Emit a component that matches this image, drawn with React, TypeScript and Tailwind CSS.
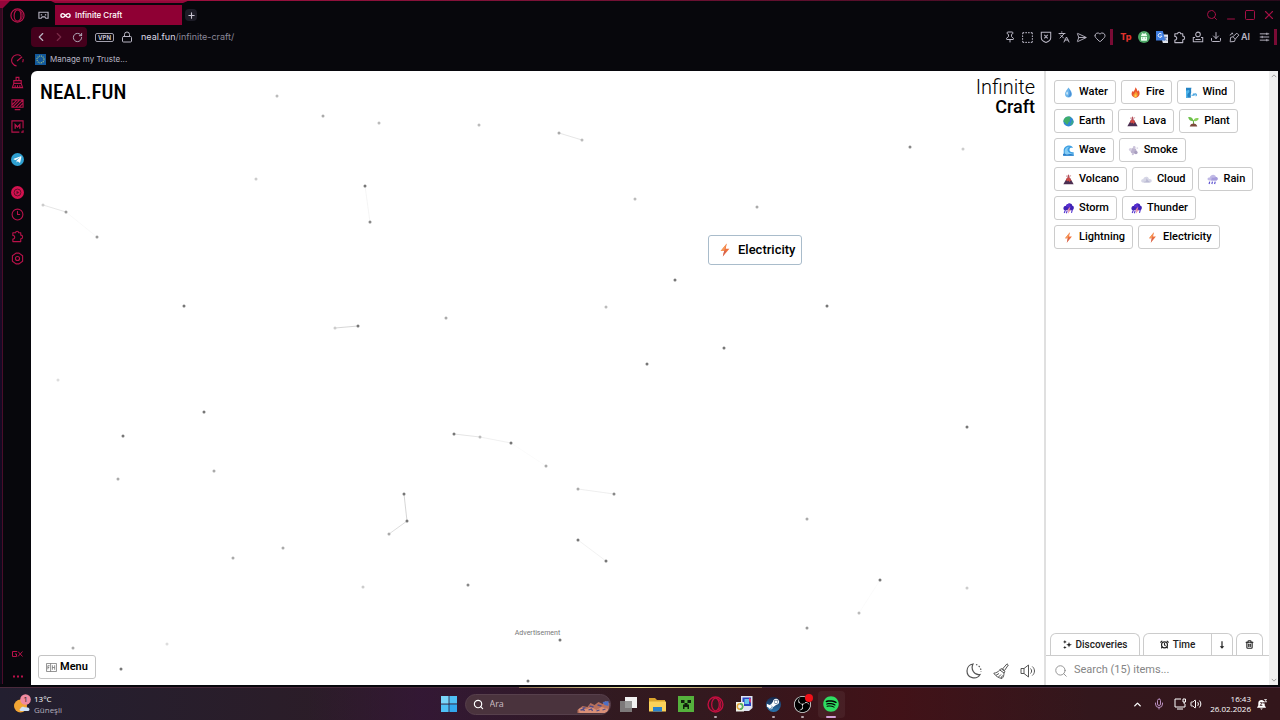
import type { ReactNode } from "react";
import {
  AlarmClock,
  ChevronLeft,
  ChevronRight,
  ChevronUp,
  Clock3,
  Download,
  Heart,
  Infinity as InfinityIcon,
  Languages,
  Lock,
  Mic,
  Minus,
  Pin,
  Plus,
  RotateCw,
  Search,
  SendHorizontal,
  Square,
  SquareDashed,
  Trash2,
  Volume2,
  X,
} from "lucide-react";
import { FaSpotify, FaSteamSymbol, FaTelegramPlane } from "react-icons/fa";
import { SiObsstudio } from "react-icons/si";

/* ---------- element glyphs ---------- */

const glyphs: Record<string, ReactNode> = {
  water: (
    <>
      <path d="M8 .8C10.500 4.500 13 7 13 10.300A5 5 0 0 1 3 10.300C3 7 5.500 4.500 8 .8Z" fill="#6bb4ea" />
      <path d="M8.500 3C11 6 12 8 12 10.500A4 4 0 0 1 7 14C10 12 10.500 8 8.500 3Z" fill="#4b8fd6" />
      <ellipse cx="6" cy="9" rx="1.200" ry="2.400" fill="#c9e8fb" />
    </>
  ),
  fire: (
    <>
      <path d="M7.500.5C11 3 10 5.500 11.500 6.500C12 6 12 5 12 4.500C14 6.500 14.200 9 13.800 11C13 14 11 15.500 8 15.500S2.500 13.500 2.300 10.300C2.200 8 3.500 6.500 4.500 5.500C4.700 6.500 5 7 5.700 7.300C5.500 4.500 8.500 3.500 7.500.5Z" fill="#e8552f" />
      <path d="M8.300 6C10 8 11.500 9 11.300 11.500C11 14 9.500 15 8 15S4.700 13.800 4.800 11.500C5 9.800 8 9 8.300 6Z" fill="#f79a2e" />
      <path d="M8 10C9.500 11.500 9.800 12.500 9.500 13.500C9 15 7 15 6.500 13.500C6.200 12.300 7.800 11.500 8 10Z" fill="#fcd34d" />
    </>
  ),
  wind: (
    <>
      <path d="M0 1H8C6.500 4 8.500 7 7 10C6.500 12 7.500 14 7 15.500H0Z" fill="#2383c4" />
      <path d="M2 5C5 3 6 7 4 8.500S1 12 3 15.500H0V5Z" fill="#4fb4ea" />
      <path d="M8 12H12.500M10 10.500H12.500A1.500 1.500 0 1 1 14 13" stroke="#4aa5e0" strokeWidth="1.800" fill="none" />
    </>
  ),
  earth: (
    <>
      <circle cx="8" cy="8" r="7.400" fill="#2f86d6" />
      <path d="M2 4C4 1 8 0 11 1.500C12 3.500 9 4.500 10 6.500C11 8.500 8 8 7.500 10.500C7 13 5 13 4 11C3.500 9 1 9 .8 8C.8 6 1 5 2 4Z" fill="#3fae6c" />
      <path d="M13 5.500C14.500 6 15.400 8 15.300 9C14.500 12 12 14 11 13.500C10 12 11 10.500 12 9.500C12.500 8.500 12 6.500 13 5.500Z" fill="#39a78d" />
    </>
  ),
  lava: (
    <>
      <path d="M6 5.500H10L15.500 15H.5Z" fill="#4b2f52" />
      <path d="M6 5.500H10L12.500 10L10.500 9.500L9.800 12L8 9.500L6.500 11L5.800 9.300L3.800 9.500Z" fill="#d04a44" />
      <path d="M8 .5L9.500 3L9 6H7L6.500 3Z" fill="#b5525c" />
      <circle cx="5.300" cy="3" r="1" fill="#c98a90" />
      <circle cx="11" cy="2.600" r=".9" fill="#c98a90" />
    </>
  ),
  plant: (
    <>
      <path d="M8 13C8.500 10 8 8 7.500 6" stroke="#5fa53a" strokeWidth="1.500" fill="none" />
      <path d="M7.800 7C4 8 1 6 .3 1.500C4.500 1 7.500 3 7.800 7Z" fill="#6cc04a" />
      <path d="M8 7C8.500 4 11.500 2 15.700 3.500C14.500 7 11 8.500 8 7Z" fill="#8ad05a" />
      <path d="M2.500 15.200C3.500 12 6 11 8 11S12.500 12 13.500 15.200Z" fill="#7d4a3c" />
    </>
  ),
  wave: (
    <>
      <path d="M1 15.500V8C1 3 5 .8 9 .8C12 .8 14 2.500 14.500 4.500C12.500 3.500 10 4 9.500 6.200C9 9 11.500 11 15.500 10.500V15.500Z" fill="#3f9fe2" />
      <path d="M2.500 8C3 4.500 6 2.300 9.500 2.500C7 4 6 6 6.800 8.500C7.600 11 11 13 15.500 12.500V15.500H4C2.500 13 2.300 10.500 2.500 8Z" fill="#86cdf5" />
      <path d="M0 13C3 11.500 5 14.500 8 13.500S13 13 15.500 14V15.800H0Z" fill="#2c7fc9" />
    </>
  ),
  smoke: (
    <>
      <circle cx="8" cy="8.500" r="4.300" fill="#bdb3cf" />
      <circle cx="3.500" cy="6.500" r="2.200" fill="#d6cfe2" />
      <circle cx="11.500" cy="11" r="2.500" fill="#a99fc0" />
      <circle cx="9" cy="3.500" r="1.900" fill="#cbc3da" />
      <circle cx="13.500" cy="4.500" r="1.400" fill="#ddd7e8" />
      <circle cx="7" cy="13.500" r="1.500" fill="#c7bfd8" />
    </>
  ),
  cloud: (
    <>
      <path d="M3.500 12.500C1 12.500 0 11 .3 9.500C.6 8 2 7.500 3.300 7.800C3.500 5 6 3.500 8.300 4C10.500 4.300 11.500 6 11.500 7.500C14 7 15.800 8.500 15.600 10.200C15.400 12 14 12.500 12.500 12.500Z" fill="#d6d6e6" />
      <path d="M4 11C7 12 9 8 7 6C10 7 10 10.500 13.500 11.500L12 12.500H4Z" fill="#b9b9d2" />
    </>
  ),
  rain: (
    <>
      <path d="M3.500 9.500C1 9.500 .3 7.800 1 6.300C1.600 5 3 4.800 4 5C5 2 7.500.8 10 1.300C12 1.700 13 3 13 4.300C15 4.300 15.800 5.800 15.500 7.300C15.200 9 14 9.500 12.500 9.500Z" fill="#c0b9e6" />
      <path d="M7 5C10 6 12 5 13 4.300C15 4.300 15.800 5.800 15.500 7.300C15.200 9 14 9.500 12.500 9.500H6Z" fill="#a59bdb" />
      <path d="M4 11L3 14.500M8 11L7 14.500M12 11L11 14.500" stroke="#5a4fd0" strokeWidth="1.700" />
    </>
  ),
  storm: (
    <>
      <path d="M3.500 10.500C1 10.500 .1 8.500 .8 6.500C1.400 5 3 4.300 4 4.500C5 1.700 7.500.4 10.300.9C12.500 1.300 13.600 2.600 13.500 4C15.400 4 16 5.800 15.700 7.500C15.400 9.500 14 10.500 12.500 10.500Z" fill="#3f22b5" />
      <path d="M4 4.500C5 1.700 7.500.4 10.300.9C9 3 10 5 12 6C9 7.500 6 7 4 4.500Z" fill="#5a2fd0" />
      <path d="M9 6.500L6 11H8L7 15.500L11.500 9.800H9.300L10.500 6.500Z" fill="#e98ba0" />
      <path d="M3.500 10L1.800 14.500M6 11.500L4.800 15M13.500 10L12.300 14.500" stroke="#5a3cd0" strokeWidth="1.700" />
    </>
  ),
  bolt: (
    <>
      <path d="M10 .5L3 9H7L5.500 15.500L13 6.500H8.800Z" fill="#f0703c" />
      <path d="M10 .5L3 9H7L8.300 5Z" fill="#f59a5a" />
      <path d="M5.500 15.500L7 9.500L9.500 8.500Z" fill="#c9605c" />
    </>
  ),
};

function Glyph({ name, className }: { name: string; className: string }) {
  return (
    <svg viewBox="0 0 16 16" className={className} aria-hidden="true">
      {glyphs[name]}
    </svg>
  );
}

const elements: [string, string][] = [
  ["water", "Water"],
  ["fire", "Fire"],
  ["wind", "Wind"],
  ["earth", "Earth"],
  ["lava", "Lava"],
  ["plant", "Plant"],
  ["wave", "Wave"],
  ["smoke", "Smoke"],
  ["lava", "Volcano"],
  ["cloud", "Cloud"],
  ["rain", "Rain"],
  ["storm", "Storm"],
  ["storm", "Thunder"],
  ["bolt", "Lightning"],
  ["bolt", "Electricity"],
];

/* ---------- canvas particles: x, y, shade ---------- */

const particles: [number, number, string][] = [
  [246, 25, "#bbb"], [292, 45, "#aaa"], [348, 52, "#bbb"], [448, 54, "#bbb"], [528, 62, "#aaa"], [551, 69, "#bbb"],
  [225, 108, "#ccc"], [334, 115, "#777"], [339, 151, "#888"], [604, 128, "#bbb"], [726, 136, "#aaa"], [879, 76, "#888"],
  [932, 78, "#ccc"], [12, 134, "#ccc"], [35, 141, "#999"], [66, 166, "#999"], [153, 235, "#777"], [415, 247, "#aaa"],
  [304, 257, "#ccc"], [327, 255, "#777"], [644, 209, "#777"], [575, 236, "#bbb"], [796, 235, "#777"], [693, 277, "#777"],
  [616, 293, "#777"], [27, 309, "#ddd"], [173, 341, "#777"], [92, 365, "#777"], [87, 408, "#aaa"], [183, 400, "#aaa"],
  [423, 363, "#777"], [449, 366, "#bbb"], [480, 372, "#777"], [515, 395, "#aaa"], [373, 423, "#777"], [376, 450, "#777"],
  [358, 463, "#aaa"], [547, 418, "#aaa"], [583, 423, "#888"], [547, 469, "#777"], [575, 490, "#777"], [936, 356, "#777"],
  [776, 448, "#aaa"], [849, 509, "#777"], [828, 542, "#bbb"], [776, 557, "#999"], [936, 517, "#ccc"], [252, 477, "#aaa"],
  [202, 487, "#aaa"], [332, 516, "#ccc"], [437, 514, "#888"], [529, 569, "#777"], [497, 610, "#777"], [42, 577, "#aaa"],
  [136, 573, "#ddd"], [90, 598, "#777"],
];

const links: [number, number, number, number, string][] = [
  [528, 62, 551, 69, "#e0e0e0"],
  [12, 134, 35, 141, "#e0e0e0"],
  [35, 141, 66, 166, "#f8f8f8"],
  [334, 115, 339, 151, "#f2f2f2"],
  [304, 257, 327, 255, "#ccc"],
  [423, 363, 449, 366, "#ddd"],
  [449, 366, 480, 372, "#ececec"],
  [480, 372, 515, 395, "#fafafa"],
  [373, 423, 376, 450, "#ccc"],
  [376, 450, 358, 463, "#d4d4d4"],
  [547, 418, 583, 423, "#eaeaea"],
  [547, 469, 575, 490, "#efefef"],
  [849, 509, 828, 542, "#fafafa"],
];

/* ---------- browser chrome ---------- */

function SideButton({ label, children, className = "" }: { label: string; children: ReactNode; className?: string }) {
  return (
    <button aria-label={label} className={`flex h-[22px] w-full shrink-0 items-center justify-center text-[#b8124a] ${className}`}>
      {children}
    </button>
  );
}

function OperaMark({ className }: { className: string }) {
  return (
    <svg viewBox="0 0 16 16" className={className} fill="none" stroke="currentColor" aria-hidden="true">
      <circle cx="8" cy="8" r="7" strokeWidth="1.300" />
      <ellipse cx="8" cy="8" rx="3.600" ry="5.900" strokeWidth="1.200" />
      <path d="M10 2.500C14 4 14 12 10 13.500" strokeWidth="1" />
    </svg>
  );
}

const line = { fill: "none", stroke: "currentColor", strokeWidth: 1.2, "aria-hidden": true } as const;

function PuzzleMark({ className }: { className: string }) {
  return (
    <svg viewBox="0 0 14 14" className={className} {...line}>
      <path d="M2 3H5A1.600 1.600 0 0 1 8.200 3H10.500V5.500A2 2 0 0 1 10.500 9.500V12.500H2V9.800A2 2 0 0 0 2 5.800Z" strokeLinejoin="round" />
    </svg>
  );
}

function SideBar() {
  return (
    <nav aria-label="Browser sidebar" className="flex w-[31px] shrink-0 flex-col pt-1 pl-[4px]">
      <SideButton label="Opera GX menu">
        <OperaMark className="size-[15px]" />
      </SideButton>
      <SideButton label="GX Control" className="mt-[23px]">
        <svg viewBox="0 0 14 14" className="size-[13px]" {...line}>
          <path d="M6 12.800A6 6 0 1 1 10.500 2.200M13 5.500A6 6 0 0 1 12.500 9M6.500 7.500L12 3" />
        </svg>
      </SideButton>
      <SideButton label="GX Cleaner">
        <svg viewBox="0 0 14 14" className="size-[13px]" {...line}>
          <path d="M5.500 5V1.500H8.500V5M3 5H11V8H3ZM3 8L1.500 12.500H12.500L11 8M4.500 10V12.500M7 10V12.500M9.500 10V12.500" />
        </svg>
      </SideButton>
      <SideButton label="Wallpaper">
        <svg viewBox="0 0 14 14" className="size-[13px]" {...line}>
          <path d="M1 2H13V10H1ZM1.500 7L6 2.500M1.500 10L9 2.500M5 10L12.500 2.500M8.500 10L13 5.500M4 12.500H10" />
        </svg>
      </SideButton>
      <SideButton label="Mods">
        <svg viewBox="0 0 14 14" className="size-[13px]" {...line}>
          <path d="M13 9V1H1V13H9M11 13H13V11" />
          <path d="M4.500 9.500V5L7 7.500L9.500 5V9.500" strokeWidth="1.400" />
        </svg>
      </SideButton>
      <SideButton label="Telegram" className="mt-[11px]">
        <span className="flex size-[13px] items-center justify-center rounded-full bg-[#2f9fd0] pr-px text-white">
          <FaTelegramPlane className="size-[9px]" />
        </span>
      </SideButton>
      <SideButton label="Player" className="mt-[11px]">
        <svg viewBox="0 0 14 14" className="size-[13px]" aria-hidden="true">
          <circle cx="7" cy="7" r="7" fill="#d3124f" />
          <circle cx="7" cy="7" r="3.700" fill="none" stroke="#5c0a28" />
          <path d="M6 5.200L8.800 7L6 8.800Z" fill="#5c0a28" />
        </svg>
      </SideButton>
      <SideButton label="History">
        <Clock3 className="size-[13px]" strokeWidth={2} />
      </SideButton>
      <SideButton label="Extensions">
        <PuzzleMark className="size-[13px]" />
      </SideButton>
      <SideButton label="Settings">
        <svg viewBox="0 0 14 14" className="size-[13px]" {...line}>
          <path d="M5.500 1.200H8.500L12.500 4V10L8.500 12.800H5.500L1.500 10V4Z" />
          <circle cx="7" cy="7" r="2.200" />
        </svg>
      </SideButton>
      <div className="flex-1" />
      <SideButton label="GX Corner">
        <svg viewBox="0 0 22 12" className="h-[6px] w-[11px]" fill="none" stroke="currentColor" strokeWidth="2" aria-hidden="true">
          <path d="M10 1H1V11H9V6H6M12 1L21 11M21 1L12 11" />
        </svg>
      </SideButton>
      <SideButton label="More">
        <svg viewBox="0 0 10 3" className="h-[3px] w-[10px]" fill="currentColor" aria-hidden="true">
          <path d="M0 .5H2V2.500H0ZM4 .5H6V2.500H4ZM8 .5H10V2.500H8Z" />
        </svg>
      </SideButton>
    </nav>
  );
}

function Tool({ label, children }: { label: string; children: ReactNode }) {
  return (
    <button aria-label={label} className="flex h-5 w-[18px] items-center justify-center text-[#b9b6c4]">
      {children}
    </button>
  );
}

function BrowserHeader() {
  return (
    <header className="flex flex-col pt-[5px] pb-1 font-['Inter',sans-serif]">
      <div className="flex h-5 items-center pr-[2px]">
        <button aria-label="Workspaces" className="flex w-6 items-center justify-center text-[#b9b6c4]">
          <svg viewBox="0 0 12 9" className="h-[9px] w-[11px] shrink-0" {...line}>
            <path d="M1 1H11V7.500H8.500L7.500 6H4.500L3.500 7.500H1Z" />
            <path d="M3 3H4.500V4.500H3ZM7.500 3H9V4.500H7.500Z" fill="currentColor" stroke="none" />
          </svg>
        </button>
        <button className="flex h-5 w-[127px] items-center gap-1 bg-[#8f0034] px-[5px] text-[8px] font-medium text-white">
          <InfinityIcon className="size-[11px]" strokeWidth={3} />
          Infinite Craft
        </button>
        <button aria-label="New tab" className="ml-[3px] flex size-3 items-center justify-center rounded-sm bg-[#1d1c27] text-[#c8c5d2]">
          <Plus className="size-[9px]" strokeWidth={3} />
        </button>
        <div className="flex-1" />
        <div className="flex items-center text-[#a51045]">
          {[
            ["Search tabs", <Search key="s" className="size-[12px]" />],
            ["Minimize", <Minus key="m" className="mt-2 size-[12px]" />],
            ["Maximize", <Square key="q" className="size-[12px]" />],
            ["Close", <X key="x" className="size-[14px]" />],
          ].map(([label, icon]) => (
            <button key={label as string} aria-label={label as string} className="flex h-5 w-[19px] items-center justify-center">
              {icon}
            </button>
          ))}
        </div>
      </div>

      <div className="mt-[2px] flex h-5 items-center pr-[3px]">
        <div className="flex rounded-sm bg-[#45001c] px-px">
          <Tool label="Back">
            <ChevronLeft className="size-[14px]" />
          </Tool>
          <button aria-label="Forward" className="flex h-5 w-[18px] items-center justify-center text-[#7a2a48]">
            <ChevronRight className="size-[14px]" />
          </button>
          <Tool label="Reload">
            <RotateCw className="size-[11px]" />
          </Tool>
        </div>
        <button className="ml-2 flex h-[9px] w-[19px] items-center justify-center rounded-xs border border-[#a3a0ae] text-[6px] font-bold text-[#c4c1cf]">
          VPN
        </button>
        <Lock className="ml-[7px] size-[12px] text-[#b9b6c4]" aria-hidden="true" />
        <button aria-label="Address" className="ml-[8px] flex-1 text-left text-[9px] text-[#8b8899]">
          <span className="text-[#dcdae4]">neal.fun</span>/infinite-craft/
        </button>
        <Tool label="Pin"><Pin className="size-[12px]" /></Tool>
        <Tool label="Snapshot"><SquareDashed className="size-[13px]" /></Tool>
        <Tool label="Ad blocker">
          <svg viewBox="0 0 14 14" className="size-[12px]" {...line}>
            <path d="M1.500 1.500H12.500V8C12.500 11 10 12.500 7 13.300C4 12.500 1.500 11 1.500 8ZM5 4.500L9 8.500M9 4.500L5 8.500" />
          </svg>
        </Tool>
        <Tool label="Translate"><Languages className="size-[12px]" /></Tool>
        <Tool label="My Flow"><SendHorizontal className="size-[11px]" /></Tool>
        <Tool label="Bookmark"><Heart className="size-[12px]" /></Tool>
        <span className="mr-1 ml-px h-4 w-[3px] bg-[#7a0b35]" />
        <button aria-label="TP extension" className="h-5 w-[18px] text-[9px] font-extrabold text-[#e0322c]">Tp</button>
        <Tool label="Download helper">
          <svg viewBox="0 0 14 14" className="size-[12px]" aria-hidden="true">
            <circle cx="7" cy="7" r="7" fill="#4aa564" />
            <path d="M3.500 6A3.500 3 0 0 1 10.500 6ZM3.500 7H10.500V10.500Q10.500 11.500 9.500 11.500H4.500Q3.500 11.500 3.500 10.500Z" fill="#eafff0" />
            <path d="M4.500 1.800L5.500 3.600M9.500 1.800L8.500 3.600" stroke="#eafff0" strokeWidth=".9" />
            <path d="M5.300 7.800V8.800M8.700 7.800V8.800" stroke="#4aa564" />
          </svg>
        </Tool>
        <Tool label="Google Translate">
          <svg viewBox="0 0 14 14" className="size-[12px]" aria-hidden="true">
            <path d="M5 4H14V14H8Z" fill="#dfe3ec" />
            <path d="M0 0H8L11 11H0Z" fill="#3f7de0" />
            <path d="M6.500 3.500A2.300 2.300 0 1 0 7 6H5" fill="none" stroke="#fff" />
            <path d="M9.500 7.500H13M11.500 6.500V7.500C11.500 9 10.500 10.500 9.500 11M10.500 9L13 11.500" fill="none" stroke="#5470a8" strokeWidth=".9" />
          </svg>
        </Tool>
        <Tool label="Extensions"><PuzzleMark className="size-[13px]" /></Tool>
        <Tool label="Profile">
          <svg viewBox="0 0 14 14" className="size-[12px]" {...line}>
            <circle cx="7" cy="4" r="2.700" />
            <path d="M3.500 7.500H1.500V12.500H12.500V7.500H10.500M4 10H10" />
          </svg>
        </Tool>
        <Tool label="Downloads"><Download className="size-[12px]" /></Tool>
        <button className="ml-1 flex h-5 items-center gap-px text-[9px] font-semibold text-[#b9b6c4]">
          <svg viewBox="0 0 14 14" className="size-[11px]" {...line}>
            <path d="M5 6L10 1.500L12.500 4L8 9ZM5 6L2 7L1.500 12.500L7 12L8 9M1 4L3 3L4 1L5 3" />
          </svg>
          AI
        </button>
        <button aria-label="Easy setup" className="ml-[5px] flex h-5 w-[18px] items-center justify-center text-[#b9b6c4]">
          <svg viewBox="0 0 14 12" className="h-[10px] w-[11px]" {...line}>
            <path d="M1 2H13M1 6H13M1 10H13M10 .5V3.500M4 4.500V7.500M10 8.500V11.500" />
          </svg>
        </button>
        <span className="ml-px h-4 w-[3px] bg-[#7a0b35]" />
      </div>

      <div className="mt-1 flex h-4 items-center pl-1">
        <a href="#trusted" className="flex items-center gap-1 text-[8px] text-[#bab8c6]">
          <svg viewBox="0 0 12 12" className="size-[11px]" aria-hidden="true">
            <rect width="12" height="12" fill="#12589c" />
            <circle cx="6" cy="6" r="3.800" fill="none" stroke="#b9cf7a" strokeWidth="1.200" strokeDasharray="1 1" />
          </svg>
          Manage my Truste...
        </a>
      </div>
    </header>
  );
}

/* ---------- game ---------- */

function GameCanvas() {
  return (
    <main className="relative flex min-w-0 flex-1 flex-col justify-between">
      <svg className="absolute inset-0 h-full w-full" aria-hidden="true">
        {links.map(([x1, y1, x2, y2, c]) => (
          <line key={`${x1}-${y1}`} x1={x1} y1={y1} x2={x2} y2={y2} stroke={c} strokeWidth="0.800" />
        ))}
        {particles.map(([x, y, c]) => (
          <circle key={`${x}-${y}`} cx={x} cy={y} r="1.500" fill={c} />
        ))}
      </svg>

      <div className="relative flex items-start justify-between pt-1 pr-[9px] pl-[9px]">
        <a href="#home" className="pt-px font-['Liberation_Sans_Narrow','Roboto_Condensed','Open_Sans',sans-serif] text-[21px] leading-8 font-medium text-black">
          NEAL.FUN
        </a>
        <h1 className="pt-[2px] text-right text-black">
          <span className="block text-[20px] leading-5 font-light">Infinite</span>
          <span className="block text-[18px] leading-5 font-medium">Craft</span>
        </h1>
      </div>

      <button className="absolute top-[164px] left-[677px] flex h-[30px] items-center gap-[6px] rounded-[3px] border border-[#a9bccb] bg-white pr-[6px] pl-[9px] text-[13px] font-medium text-black">
        <Glyph name="bolt" className="size-[14px]" />
        Electricity
      </button>

      <div className="relative">
        <p className="text-center text-[7px] leading-4 text-[#777]">Advertisement</p>
        <div className="flex items-end justify-between px-[7px] pt-[14px] pb-[6px]">
          <button className="flex h-6 items-center gap-[3px] rounded-[3px] border border-[#c4c4c4] bg-white px-[7px] text-[11px] font-semibold text-black">
            <svg viewBox="0 0 12 10" className="h-[9px] w-[11px]" fill="none" stroke="#777" strokeWidth=".9" aria-hidden="true">
              <path d="M.5.5H11.500V9.500H.5ZM5 .5V9.500M2 3H4M2 5H3.500M2 3V7M7 2.500V7.500M9.500 2.500V7.500M7 5H9.500" />
            </svg>
            Menu
          </button>
          <div className="flex gap-[11px] pr-px text-[#555]">
            <button aria-label="Dark mode">
              <svg viewBox="0 0 16 16" className="size-4" {...line}>
                <path d="M7 1C3.500 1.500 1 4.500 1 8A7 7 0 0 0 14 11.500C8 12.500 4.500 6 7 1Z" />
                <path d="M10 1.500A7 7 0 0 1 15 9" strokeDasharray="1.500 1.500" />
              </svg>
            </button>
            <button aria-label="Clear canvas">
              <svg viewBox="0 0 16 16" className="size-4" {...line} strokeWidth={1}>
                <path d="M14 .8L15.300 2L11.500 7.500L9.500 6ZM8 5.500L12 8.500L11 10L6.800 7ZM6.800 7C5 9 3 10 .8 10.200C2.500 13 5.500 15 9 15.500C10.500 14 11 12 11 10M3 12.300L6 10.500M5.500 14L8 11.500M8 15L9.500 12.500" />
              </svg>
            </button>
            <button aria-label="Sound">
              <svg viewBox="0 0 16 16" className="size-4" {...line} strokeWidth={1}>
                <path d="M1 5.500H4L8.500 2V14L4 10.500H1ZM4 5.500V10.500M10.500 5.500C12 7 12 9 10.500 10.500M12.300 3.500C15.200 6 15.200 10 12.300 12.500" />
              </svg>
            </button>
          </div>
        </div>
      </div>
    </main>
  );
}

function ItemsPanel() {
  const tab = "flex h-[22px] items-center justify-center border border-b-0 border-[#ccc] bg-white text-[10px] font-medium text-[#222]";
  return (
    <aside className="flex w-[225px] shrink-0 flex-col border-l-2 border-[#e0e0e0]">
      <div className="flex flex-1 flex-wrap content-start gap-[5px] pt-[9px] pr-[9px] pl-2">
        {elements.map(([glyph, name]) => (
          <button
            key={name}
            className="flex h-6 items-center gap-[5px] rounded-[3px] border border-[#ccc] bg-white pr-[7px] pl-[8px] text-[11px] font-medium text-black"
          >
            <Glyph name={glyph} className="size-[11px]" />
            {name}
          </button>
        ))}
      </div>
      <div className="flex gap-[3px] border-b border-[#ccc] pr-[6px] pl-1">
        <button className={`${tab} w-[90px] gap-1 rounded-t-md`}>
          <svg viewBox="0 0 12 12" className="size-[9px]" fill="currentColor" aria-hidden="true">
            <path d="M8 2.500L9 5.200L12 6.200L9 7.200L8 10L7 7.200L4.300 6.200L7 5.200ZM2.500 0L3.200 1.800L5 2.500L3.200 3.200L2.500 5L1.800 3.200L0 2.500L1.800 1.800ZM2.500 7.500L3.200 9.200L5 10L3.200 10.700L2.500 12L1.800 10.700L0 10L1.800 9.200Z" />
          </svg>
          Discoveries
        </button>
        <div className="flex flex-1">
          <button className={`${tab} flex-1 gap-1 rounded-tl-md`}>
            <AlarmClock className="size-[9px]" strokeWidth={3} />
            Time
          </button>
          <button aria-label="Sort descending" className={`${tab} w-[21px] rounded-tr-md border-l-0`}>
            <svg viewBox="0 0 8 10" className="h-[8px] w-[6px]" aria-hidden="true" fill="currentColor">
              <path d="M3.200 0H4.800V6.500H7L4 10L1 6.500H3.200Z" />
            </svg>
          </button>
        </div>
        <button aria-label="Delete" className={`${tab} w-[27px] rounded-t-md`}>
          <Trash2 className="size-[9px]" strokeWidth={3} />
        </button>
      </div>
      <label className="flex h-[29px] items-center gap-[6px] pl-2">
        <Search className="size-[14px] shrink-0 text-[#888]" strokeWidth={1.5} aria-hidden="true" />
        <input
          type="search"
          aria-label="Search items"
          placeholder="Search (15) items..."
          className="w-full min-w-0 font-['Roboto',sans-serif] text-[11px] text-black outline-none placeholder:text-[#858585]"
        />
      </label>
    </aside>
  );
}

/* ---------- taskbar ---------- */

function Task({ label, children, dot = "", className = "" }: { label: string; children: ReactNode; dot?: string; className?: string }) {
  return (
    <button aria-label={label} className={`relative flex h-[27px] w-[27px] items-center justify-center rounded-sm ${className}`}>
      {children}
      {dot && <span className={`absolute bottom-0 h-[2px] rounded-full ${dot}`} />}
    </button>
  );
}

function Taskbar() {
  return (
    <footer className="relative grid h-[33px] shrink-0 grid-cols-[1fr_auto_1fr] items-center border-t border-[#4a2a3c] bg-linear-to-r from-[#231f30] via-[#33191f] via-52% to-[#33161b] font-['Open_Sans',sans-serif] text-white">
      <div className="absolute inset-0 bg-linear-to-r from-transparent from-24% via-[#35163a]/70 via-33% to-transparent to-48%" />
      <div className="absolute inset-0 bg-linear-to-r from-transparent from-55% via-[#451016]/80 via-70% to-transparent to-85%" />
      <div className="absolute -top-px left-[519px] h-px w-[243px] bg-linear-to-r from-[#8a6a50] via-[#f7eaa0] to-[#8a6a50]" />

      <button className="relative flex items-center gap-[3px] justify-self-start pl-[13px] text-left">
        <svg viewBox="0 0 18 20" className="h-[20px] w-[18px]" aria-hidden="true">
          <circle cx="7.500" cy="12" r="6.500" fill="#f2a534" />
          <path d="M8 17C6.500 17 6 15 7.500 14.500C8 12.500 11 12 12 13.500C14.500 13 16.500 14 16.500 15.500C16.500 16.600 15.500 17 14.500 17Z" fill="#cfe2f7" />
          <circle cx="12.500" cy="5.500" r="5.300" fill="#f08aa0" />
          <text x="12.500" y="8.300" textAnchor="middle" fontSize="8" fill="#222">1</text>
        </svg>
        <span className="text-[8px] leading-[11px]">
          <span className="block">13°C</span>
          <span className="block text-[#b4aebc]">Güneşli</span>
        </span>
      </button>

      <div className="relative flex items-center gap-[2px]">
        <Task label="Start">
          <svg viewBox="0 0 16 16" className="size-4" fill="#4fc0f5" aria-hidden="true">
            <path d="M0 0H7.600V7.600H0Z" fill="#7ad6fa" />
            <path d="M8.400 0H16V7.600H8.400ZM0 8.400H7.600V16H0Z" />
            <path d="M8.400 8.400H16V16H8.400Z" fill="#33a7ee" />
          </svg>
        </Task>
        <label className="mr-[2px] flex h-[21px] w-[146px] items-center gap-[6px] overflow-hidden rounded-full border border-[#57404c] bg-[#4a333d] pl-[7px]">
          <Search className="size-[11px] shrink-0" strokeWidth={2.5} aria-hidden="true" />
          <input
            type="text"
            aria-label="Search"
            placeholder="Ara"
            className="w-full min-w-0 text-[9px] outline-none placeholder:text-[#c9bdc4]"
          />
          <svg viewBox="0 0 32 12" className="mt-[6px] h-[12px] w-[33px] shrink-0" aria-hidden="true">
            <path d="M0 9L5 5L10 6L13 2L17 4L21 1L25 3L28 0L32 2V12H0Z" fill="#b8705c" />
            <path d="M1 8L6 6L9 8L14 6L19 9L24 6L31 8V12H2Z" fill="#d99078" />
            <path d="M3 9L6 8.500L7 10M11 9L14 8L15 10M19 10L22 9M25 9L28 8M12 5L16 6M20 4L24 5M5 7L8 7" stroke="#4f4a88" strokeWidth="1.300" fill="none" />
            <path d="M25 1L31 0V5L27 4Z" fill="#4c6fc4" />
          </svg>
        </label>
        <Task label="Task view">
          <svg viewBox="0 0 17 15" className="h-[15px] w-[17px]" aria-hidden="true">
            <rect x="5" width="12" height="11" fill="#f1f1f1" />
            <rect y="4" width="12" height="11" fill="#8b8b8b" opacity=".85" />
          </svg>
        </Task>
        <Task label="File Explorer">
          <svg viewBox="0 0 17 15" className="h-[15px] w-[17px]" aria-hidden="true">
            <path d="M0 1H6L8 3H16V8H0Z" fill="#dba42c" />
            <path d="M0 4.500H17V14.500H0Z" fill="#fbd25a" />
            <path d="M4 10H13V14.500H4Z" fill="#2a82cc" />
          </svg>
        </Task>
        <Task label="Minecraft">
          <svg viewBox="0 0 16 16" className="size-4" aria-hidden="true">
            <rect width="16" height="16" fill="#55b13c" />
            <path d="M3 4H6.500V7H3ZM9.500 4H13V7H9.500ZM6.500 7H9.500V8.500H11V13H9.500V11H6.500V13H5V8.500H6.500Z" fill="#10210c" />
          </svg>
        </Task>
        <Task label="Opera GX" dot="w-[3px] bg-[#b8a8b0]">
          <OperaMark className="size-[17px] text-[#c40f40]" />
        </Task>
        <Task label="Remote tools">
          <svg viewBox="0 0 17 16" className="h-4 w-[17px]" aria-hidden="true">
            <path d="M5 0H16.500V12L13 15H5Z" fill="#dfe4f2" />
            <path d="M6.500 1.500H15V10H6.500Z" fill="#2b46c8" />
            <path d="M8.500 3H13V8H8.500Z" fill="#67c7e8" />
            <path d="M0 6H8V15.500H0Z" fill="#eef2ea" />
            <circle cx="4" cy="10.500" r="2.700" fill="none" stroke="#e5a63a" strokeWidth="1.500" />
            <path d="M4 7.800A2.700 2.700 0 0 1 4 13.200" fill="none" stroke="#49b36a" strokeWidth="1.500" />
            <path d="M13 1.500L15 3V7L13 5Z" fill="#d3407c" />
          </svg>
        </Task>
        <Task label="Steam" dot="w-[3px] bg-[#b8a8b0]">
          <span className="flex size-[15px] items-center justify-center rounded-full bg-linear-to-b from-[#14264a] to-[#2a76b0]">
            <FaSteamSymbol className="size-[14px]" />
          </span>
        </Task>
        <Task label="OBS Studio" dot="w-[3px] bg-[#b8a8b0]">
          <span className="flex size-[17px] items-center justify-center rounded-full bg-black">
            <SiObsstudio className="size-[17px] text-[#e6e6e6]" />
          </span>
          <span className="absolute top-[3px] right-[3px] size-2 rounded-full bg-[#f01018]" />
        </Task>
        <Task label="Spotify" dot="w-[10px] bg-[#d3a0d8]" className="bg-white/5">
          <span className="flex size-[14px] items-center justify-center rounded-full bg-black">
            <FaSpotify className="size-[16px] shrink-0 text-[#2fdd62]" />
          </span>
        </Task>
      </div>

      <div className="relative flex items-center justify-self-end pr-[13px]">
        <button aria-label="Show hidden icons"><ChevronUp className="size-[11px]" strokeWidth={3} /></button>
        <Mic className="ml-[10px] size-[12px] text-[#b98fc0]" aria-label="Microphone in use" />
        <svg viewBox="0 0 12 12" className="ml-[9px] size-[12px]" {...line} strokeWidth={1}>
          <path d="M7 1H1V9H11V6M3 11H9M9 1H11.500V4H9ZM10.200 4V6" />
        </svg>
        <Volume2 className="ml-1 size-[12px]" aria-hidden="true" />
        <time className="ml-[8px] text-right text-[8px] leading-[10px]">
          <span className="block">16:43</span>
          <span className="block">26.02.2026</span>
        </time>
        <svg viewBox="0 0 12 12" className="ml-[5px] size-[11px]" aria-label="Notifications">
          <path d="M1 9.500L2.500 7V4.500C2.500 2 4 1 6 1S9.500 2 9.500 4.500V7L11 9.500ZM4.500 10.300H7.500L6 11.800Z" fill="#fff" />
          <path d="M4.500 4H7L4.500 7H7M8 1.500H10.500L8 4.500H10.500" stroke="#33161b" strokeWidth=".9" fill="none" />
          <path d="M9 .5H11.500L9.500 3H12" stroke="#fff" strokeWidth=".9" fill="none" />
        </svg>
      </div>
    </footer>
  );
}

export default function App() {
  return (
    <div className="relative flex h-screen flex-col bg-[#07070c] font-['Roboto',sans-serif]">
      <svg className="absolute top-0 left-0 h-3 w-full" aria-hidden="true">
        <defs>
          <linearGradient id="edge" x1="0" x2="1">
            <stop offset="0" stopColor="#b00d42" />
            <stop offset="0.400" stopColor="#7d1238" />
            <stop offset="1" stopColor="#2a0a1c" />
          </linearGradient>
        </defs>
        <path d="M0 0H190L183 3H55L51 1H10L2 9H0Z" fill="#95063a" />
        <rect width="100%" height="1" fill="url(#edge)" />
      </svg>
      <div className="absolute top-2 bottom-9 left-0 w-[3px] border-r border-[#4a0d2a] bg-linear-to-b from-[#330a20] via-[#160a26] to-[#0c0a18]" />

      <div className="relative flex min-h-0 flex-1">
        <SideBar />
        <div className="flex min-w-0 flex-1 flex-col">
          <BrowserHeader />
          <div className="mr-[2px] mb-[2px] flex min-h-0 flex-1 overflow-hidden rounded-tl-md bg-white">
            <GameCanvas />
            <ItemsPanel />
            <div className="flex w-[9px] shrink-0 flex-col items-center justify-between bg-[#f0f0f0] py-[3px] text-[#999]">
              <svg viewBox="0 0 8 5" className="h-[4px] w-[6px]" {...line}><path d="M1 4L4 1L7 4" /></svg>
              <svg viewBox="0 0 8 5" className="h-[4px] w-[6px]" {...line}><path d="M1 1L4 4L7 1" /></svg>
            </div>
          </div>
        </div>
      </div>
      <Taskbar />
    </div>
  );
}
